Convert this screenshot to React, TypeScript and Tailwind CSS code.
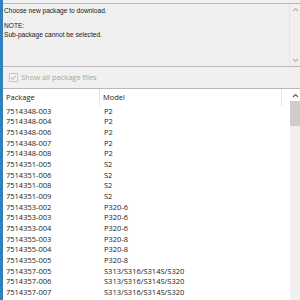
import React from "react";

const rows: [string, string][] = [
  ["7514348-003", "P2"],
  ["7514348-004", "P2"],
  ["7514348-006", "P2"],
  ["7514348-007", "P2"],
  ["7514348-008", "P2"],
  ["7514351-005", "S2"],
  ["7514351-006", "S2"],
  ["7514351-008", "S2"],
  ["7514351-009", "S2"],
  ["7514353-002", "P320-6"],
  ["7514353-003", "P320-6"],
  ["7514353-004", "P320-6"],
  ["7514355-003", "P320-8"],
  ["7514355-004", "P320-8"],
  ["7514355-005", "P320-8"],
  ["7514357-005", "S313/S316/S314S/S320"],
  ["7514357-006", "S313/S316/S314S/S320"],
  ["7514357-007", "S313/S316/S314S/S320"],
];

function Chevron({ up, color = "#a0a0a0" }: { up?: boolean; color?: string }) {
  return (
    <svg width="7" height="5" viewBox="0 0 7 5">
      <path
        d={up ? "M1 4 L3.5 1.5 L6 4" : "M1 1 L3.5 3.5 L6 1"}
        fill="none"
        stroke={color}
        strokeWidth="1.2"
      />
    </svg>
  );
}

export default function App() {
  return (
    <div
      className="w-[300px] h-[300px] overflow-hidden flex bg-[#f0f0f0] text-[#1a1a1a]"
      style={{ fontFamily: '"Open Sans", "Noto Sans", sans-serif' }}
    >
      <div className="w-[3px] bg-[#2f80bf] shrink-0" />
      <div className="flex-1 flex flex-col min-w-0">
        <div className="h-[3px] shrink-0" />
        {/* textarea */}
        <div className="h-[64px] shrink-0 flex border-t border-b border-[#b9b9b9] bg-[#f0f0f0]">
          <div
            className="flex-1 pl-[1px] pt-[1.5px] text-[6.6px] leading-[9px]"
            style={{ fontFamily: '"Liberation Sans", Arial, sans-serif' }}
          >
            <div>Choose new package to download.</div>
            <div className="h-[6px]" />
            <div>NOTE:</div>
            <div>Sub-package cannot be selected.</div>
          </div>
          <div className="w-[11px] border-l border-[#e3e3e3] flex flex-col items-center justify-between py-[3px]">
            <Chevron up color="#b4b4b4" />
            <Chevron color="#b4b4b4" />
          </div>
        </div>
        {/* checkbox row */}
        <div className="h-[21px] shrink-0 flex items-center pl-[6px] gap-[3px] text-[7.5px] text-[#a8a8a8]">
          <div className="w-[9px] h-[9px] border border-[#c8c8c8] bg-[#f4f4f4] flex items-center justify-center">
            <svg width="7" height="7" viewBox="0 0 7 7">
              <path d="M1 3.5 L2.8 5.3 L6 1.5" fill="none" stroke="#b8b8b8" strokeWidth="1.1" />
            </svg>
          </div>
          <span>Show all package files</span>
        </div>
        {/* list */}
        <div className="flex-1 flex bg-white border-t border-[#b9b9b9] min-h-0">
          <div className="flex-1 flex flex-col min-w-0">
            <div className="h-[17px] shrink-0 flex text-[7.5px] items-center">
              <div className="w-[97px] h-full flex items-center pl-[3px] border-r border-[#e5e5e5]">Package</div>
              <div className="w-[182px] h-full flex items-center pl-[3px] border-r border-[#e5e5e5]">Model</div>
            </div>
            <div className="text-[7.5px]">
              {rows.map(([p, m]) => (
                <div key={p} className="h-[10.67px] flex items-center">
                  <div className="w-[98px] pl-[3px]">{p}</div>
                  <div className="pl-[3px]">{m}</div>
                </div>
              ))}
            </div>
          </div>
          <div className="w-[10px] shrink-0 bg-[#f0f0f0] flex flex-col items-center">
            <div className="h-[12px] w-full bg-white flex items-center justify-center">
              <Chevron up color="#606060" />
            </div>
            <div className="w-full h-[25px] bg-[#cdcdcd]" />
          </div>
        </div>
      </div>
    </div>
  );
}
